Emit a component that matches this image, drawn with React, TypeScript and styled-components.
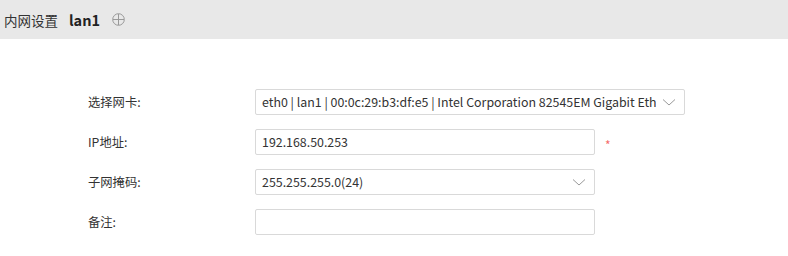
import React from 'react';
import styled, { createGlobalStyle } from 'styled-components';

const GlobalStyle = createGlobalStyle`
  html, body {
    margin: 0;
    padding: 0;
    background: #fff;
  }
  body {
    font-family: "Noto Sans CJK SC", "Noto Sans", sans-serif;
    color: #333;
  }
`;

const Header = styled.div`
  height: 39px;
  background-color: #e8e8e8;
  display: flex;
  align-items: center;
  padding-left: 4px;
  box-sizing: border-box;
`;

const PageTitle = styled.span`
  font-size: 13.5px;
  color: #333;
`;

const NodeName = styled.span`
  font-size: 14.5px;
  font-weight: bold;
  color: #222;
  margin-left: 11px;
`;

const AddIcon = styled.svg`
  margin-left: 12px;
  width: 13px;
  height: 13px;
`;

const Form = styled.div`
  padding: 50px 0 0 88px;
  display: flex;
  flex-direction: column;
  gap: 14px;
`;

const Row = styled.div`
  display: flex;
  align-items: center;
  height: 26px;
`;

const Label = styled.label`
  width: 167px;
  font-size: 12.3px;
  color: #333;
`;

const Field = styled.div<{ $width: number }>`
  position: relative;
  width: ${(p) => p.$width}px;
  height: 26px;
  box-sizing: border-box;
  border: 1px solid #d9d9d9;
  border-radius: 2px;
  background: #fff;
  display: flex;
  align-items: center;
  padding: 0 28px 0 6px;
  font-size: 12.4px;
  color: #333;
`;

const Value = styled.span`
  flex: 1;
  min-width: 0;
  white-space: nowrap;
  overflow: hidden;
`;

const Arrow = styled.svg`
  position: absolute;
  right: 8px;
  top: 8px;
  width: 14px;
  height: 9px;
`;

const Required = styled.span`
  margin-left: 10px;
  padding-top: 5px;
  color: #f56c6c;
  font-size: 12px;
  line-height: 1;
`;

const ChevronDown = () => (
  <Arrow viewBox="0 0 14 9">
    <polyline points="1,1.5 7,7 13,1.5" fill="none" stroke="#999" strokeWidth="1" />
  </Arrow>
);

export default function App() {
  return (
    <>
      <GlobalStyle />
      <Header>
        <PageTitle>内网设置</PageTitle>
        <NodeName>lan1</NodeName>
        <AddIcon viewBox="0 0 13 13">
          <circle cx="6.5" cy="6.5" r="5.8" fill="none" stroke="#999" strokeWidth="1" />
          <line x1="6.5" y1="1" x2="6.5" y2="12" stroke="#999" strokeWidth="1" />
          <line x1="1" y1="6.5" x2="12" y2="6.5" stroke="#999" strokeWidth="1" />
        </AddIcon>
      </Header>
      <Form>
        <Row>
          <Label>选择网卡:</Label>
          <Field $width={430}>
            <Value>eth0 | lan1 | 00:0c:29:b3:df:e5 | Intel Corporation 82545EM Gigabit Eth</Value>
            <ChevronDown />
          </Field>
        </Row>
        <Row>
          <Label>IP地址:</Label>
          <Field $width={340}>
            <Value>192.168.50.253</Value>
          </Field>
          <Required>*</Required>
        </Row>
        <Row>
          <Label>子网掩码:</Label>
          <Field $width={340}>
            <Value>255.255.255.0(24)</Value>
            <ChevronDown />
          </Field>
        </Row>
        <Row>
          <Label>备注:</Label>
          <Field $width={340} />
        </Row>
      </Form>
    </>
  );
}
